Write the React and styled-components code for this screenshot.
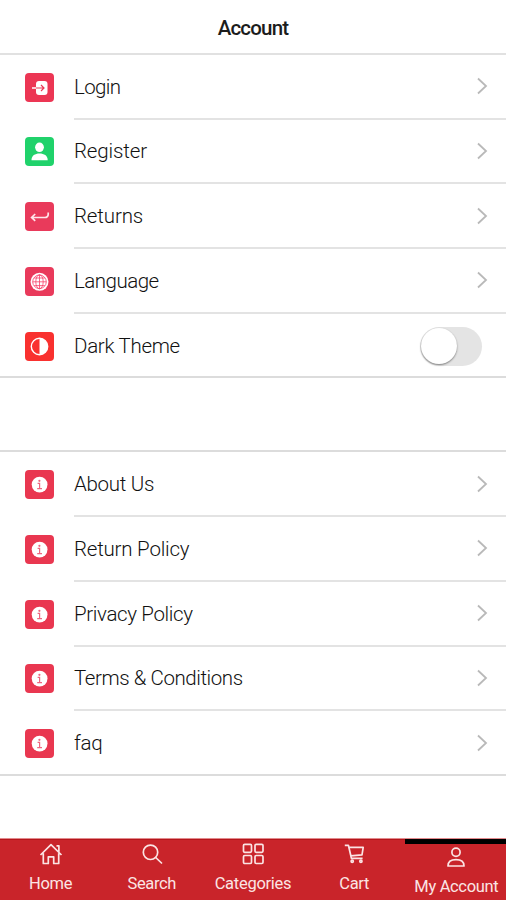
import React, { useState } from 'react'
import styled, { createGlobalStyle } from 'styled-components'

const GlobalStyle = createGlobalStyle`
    * { box-sizing: border-box; }
    body {
        margin: 0;
        background: #fff;
        font-family: Roboto, "Open Sans", sans-serif;
    }
`

const Screen = styled.div`
    display: flex;
    flex-direction: column;
    width: 506px;
    height: 900px;
    overflow: hidden;
    background: #fff;
`

const Header = styled.header`
    flex: none;
    height: 54.75px;
    padding-top: 2px;
    border-bottom: 2px solid #e1e1e1;
    line-height: 53px;
    text-align: center;
    font-size: 20.5px;
    font-weight: 500;
    letter-spacing: -0.8px;
    color: #1c1c1c;
`

const Section = styled.section`
    flex: none;
    ${props => props.$spaced ? 'margin-top: 72px; border-top: 2px solid #dcdcdc;' : ''}
    border-bottom: 2px solid #dcdcdc;
`

const Row = styled.div`
    display: flex;
    height: 64.75px;
    padding-left: 25px;

    &:last-child {
        height: 62.5px;
    }
`

const Tile = styled.div`
    display: flex;
    width: 29px;
    height: 29px;
    margin: 17.8px 20px 0 0;
    border-radius: 4px;
    background: ${props => props.color};

    svg {
        display: block;
        width: 29px;
        height: 29px;
    }
`

const RowBody = styled.div`
    display: flex;
    flex: 1;
    align-items: center;
    justify-content: space-between;
    padding-right: 16px;
    border-bottom: 2px solid #e3e3e3;

    ${Row}:last-child & {
        border-bottom: none;
    }
`

const Label = styled.span`
    padding-top: 1px;
    font-size: 20.5px;
    font-weight: 300;
    line-height: 28px;
    white-space: nowrap;
    letter-spacing: ${props => props.$tracking || 0}px;
    color: #111;
`

const Chevron = styled.svg`
    width: 14px;
    height: 20px;
    fill: none;
    stroke: #b9b9b9;
    stroke-width: 1.8;
`

const Toggle = styled.button`
    display: flex;
    justify-content: ${props => props.$on ? 'flex-end' : 'flex-start'};
    width: 62px;
    height: 39px;
    margin: 3px 8px 0 0;
    padding: 1px;
    border: none;
    border-radius: 20px;
    background: ${props => props.$on ? '#cb242a' : '#e4e4e4'};
`

const Knob = styled.span`
    width: 36px;
    height: 36px;
    border-radius: 50%;
    background: #fff;
    box-shadow: 0 1px 2px rgba(0, 0, 0, 0.45);
`

const TabBar = styled.nav`
    display: flex;
    flex: none;
    height: 62px;
    margin-top: auto;
    border-top: 1px solid #e2898c;
    background: #c9242a;
`

const Tab = styled.a`
    display: flex;
    flex: 0 0 20%;
    flex-direction: column;
    align-items: center;
    border-top: ${props => props.$active ? '5px solid #000' : '1px solid #b5151b'};
    padding-top: ${props => props.$active ? '2px' : '3px'};
    padding-left: ${props => props.$active ? '2px' : '0'};
    color: #fbe4e4;

    svg {
        display: block;
        width: 24px;
        height: 22px;
        fill: none;
        stroke: currentColor;
        stroke-width: 1.7;
        stroke-linejoin: round;
    }
`

const TabLabel = styled.span`
    margin-top: 9px;
    font-size: 16.5px;
    line-height: 20px;
    white-space: nowrap;
    letter-spacing: ${props => props.$tracking || 0}px;
`

const icons = {
    login: (
        <svg viewBox="0 0 29 29">
            <rect x="11" y="8" width="11.5" height="14" rx="3" fill="#fff" />
            <path d="M7 15h4" stroke="#fff" strokeWidth="1.5" />
            <path d="M11 15h7.5M16 12l3 3-3 3" fill="none" stroke="#ec3654" strokeWidth="1.2" />
        </svg>
    ),
    user: (
        <svg viewBox="0 0 29 29" fill="#fff">
            <ellipse cx="14.5" cy="10.3" rx="4.4" ry="4.8" />
            <path d="M6.5 23.2c0-4.7 3.5-6.7 8-6.7s8.2 2 8.2 6.7z" />
        </svg>
    ),
    returns: (
        <svg viewBox="0 0 29 29" fill="none" stroke="#ffe5ea" strokeWidth="1.7">
            <path d="M23.2 10.5v1.7c0 2-1.3 3.3-3.5 3.3H6.8M10.2 12l-3.6 3.5 3.6 3.3" />
        </svg>
    ),
    globe: (
        <svg viewBox="0 0 29 29" fill="none" stroke="#f8436b" strokeWidth="0.8">
            <circle cx="14.5" cy="14.8" r="9" fill="#fff" stroke="none" />
            <circle cx="14.5" cy="14.8" r="6.8" />
            <ellipse cx="14.5" cy="14.8" rx="3.7" ry="7" />
            <path d="M14.5 7.6v14.4M7.7 14.8h13.6M9.2 11h10.6M9.2 18.6h10.6" />
        </svg>
    ),
    contrast: (
        <svg viewBox="0 0 29 29">
            <circle cx="14.5" cy="14.5" r="8.2" fill="none" stroke="#fff" strokeWidth="1.4" />
            <path d="M14.5 6.2a8.3 8.3 0 0 1 0 16.6z" fill="#fff" />
        </svg>
    ),
    info: (
        <svg viewBox="0 0 29 29">
            <circle cx="14.6" cy="14.6" r="7.9" fill="#fff" />
            <circle cx="14.4" cy="10.8" r="1.1" fill="#ef6680" />
            <path d="M12.6 13.4h2v5.2M12.2 18.7h4.8" fill="none" stroke="#ef6680" strokeWidth="1.2" />
        </svg>
    )
}

const accountItems = [
    { label: 'Login', tracking: -0.65, icon: 'login', color: '#ec3654' },
    { label: 'Register', tracking: -0.15, icon: 'user', color: '#20d26b' },
    { label: 'Returns', tracking: -0.15, icon: 'returns', color: '#e93a5b' },
    { label: 'Language', tracking: -0.5, icon: 'globe', color: '#e93a5b' },
    { label: 'Dark Theme', tracking: -0.3, icon: 'contrast', color: '#f9312f', toggle: true }
]

const infoItems = [
    { label: 'About Us', tracking: -0.3 },
    { label: 'Return Policy', tracking: -0.22 },
    { label: 'Privacy Policy', tracking: -0.36 },
    { label: 'Terms & Conditions', tracking: -0.43 },
    { label: 'faq', tracking: -0.3 }
]

const tabs = [
    {
        label: 'Home',
        tracking: -0.35,
        icon: <svg viewBox="0 0 24 22"><path d="M1.5 12 12 1.7 22.5 12M17.5 2.8h2.4v6M4.3 10.3v10.2h5v-6.7h5.4v6.7h5V10.3" /></svg>
    },
    {
        label: 'Search',
        tracking: -0.35,
        icon: <svg viewBox="0 0 24 22"><circle cx="10.5" cy="9.3" r="7.2" /><path d="m15.7 14.5 6.3 6" /></svg>
    },
    {
        label: 'Categories',
        tracking: -0.28,
        icon: (
            <svg viewBox="0 0 24 22">
                <rect x="2.5" y="1.3" width="8" height="8" rx="1.2" />
                <rect x="14" y="1.3" width="8" height="8" rx="1.2" />
                <rect x="2.5" y="12.5" width="8" height="8" rx="1.2" />
                <rect x="14" y="12.5" width="8" height="8" rx="1.2" />
            </svg>
        )
    },
    {
        label: 'Cart',
        tracking: -0.3,
        icon: (
            <svg viewBox="0 0 24 22">
                <path d="M2.8 2.3h3.6l3 13h11.2M6.9 4.4h14.3l-1.2 7.4-11.3 1" />
                <circle cx="10.2" cy="18.2" r="1.1" />
                <circle cx="18.9" cy="18.2" r="1.1" />
            </svg>
        )
    },
    {
        label: 'My Account',
        tracking: -0.33,
        active: true,
        icon: <svg viewBox="0 0 24 22"><circle cx="12" cy="6.2" r="4.1" /><path d="M4 20c0-4.3 2.8-6.3 8-6.3s8 2 8 6.3z" /></svg>
    }
]

const Item = ({ label, tracking, icon = 'info', color = '#e93750', children }) => (
    <Row>
        <Tile color={color}>{icons[icon]}</Tile>
        <RowBody>
            <Label $tracking={tracking}>{label}</Label>
            {children || <Chevron viewBox="0 0 14 20"><path d="m2 2.5 8 7.5-8 7.5" /></Chevron>}
        </RowBody>
    </Row>
)

const App = () => {
    const [dark, setDark] = useState(false)

    return (
        <Screen>
            <GlobalStyle />
            <Header>Account</Header>
            <Section>
                {accountItems.map(({ toggle, ...item }) => (
                    <Item key={item.label} {...item}>
                        {toggle && <Toggle $on={dark} onClick={() => setDark(!dark)}><Knob /></Toggle>}
                    </Item>
                ))}
            </Section>
            <Section $spaced>
                {infoItems.map(item => <Item key={item.label} {...item} />)}
            </Section>
            <TabBar>
                {tabs.map(tab => (
                    <Tab key={tab.label} $active={tab.active}>
                        {tab.icon}
                        <TabLabel $tracking={tab.tracking}>{tab.label}</TabLabel>
                    </Tab>
                ))}
            </TabBar>
        </Screen>
    )
}

export default App
